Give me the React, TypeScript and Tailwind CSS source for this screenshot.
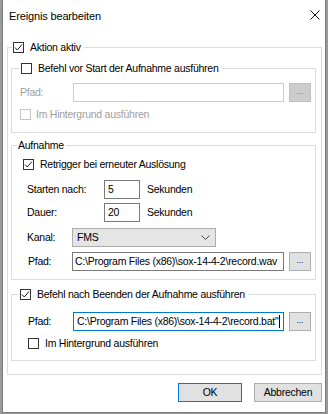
import React from "react";

const Check = ({ checked, disabled }: { checked?: boolean; disabled?: boolean }) => (
  <span
    className={`inline-flex w-[11px] h-[11px] shrink-0 items-center justify-center bg-white border ${
      disabled ? "border-[#c4c4c4]" : "border-[#333333]"
    }`}
  >
    {checked && (
      <svg width="9" height="9" viewBox="0 0 9 9" className="block">
        <polyline points="1,4.5 3.3,7 8,1.5" fill="none" stroke="#222" strokeWidth="1" />
      </svg>
    )}
  </span>
);

const Dots = ({ disabled }: { disabled?: boolean }) => (
  <div
    className={`w-[22px] h-[19px] ml-[5px] flex items-center justify-center border text-[9px] leading-none pb-[2px] ${
      disabled ? "bg-[#cccccc] border-[#bfbfbf] text-[#8a8a8a]" : "bg-[#e1e1e1] border-[#adadad] text-[#333]"
    }`}
  >
    ...
  </div>
);

export default function App() {
  return (
    <div className="w-[328px] h-[414px] bg-[#9a9a9a] pl-[2px] font-['Liberation_Sans',Arial,sans-serif] text-[10.5px] leading-[11px] tracking-[-0.25px] text-black overflow-hidden">
      <div className="w-[324px] h-[413px] bg-white border border-t-0 border-[#7a7a7a] flex flex-col">
        {/* Title bar */}
        <div className="h-[30px] flex items-center pl-[6px] pr-[3px] shrink-0">
          <span className="text-[11px] tracking-[-0.15px] pt-[2px]">Ereignis bearbeiten</span>
          <div className="flex-1" />
          <svg width="10" height="10" viewBox="0 0 10 10" className="mr-[2px]">
            <line x1="0.5" y1="0.5" x2="9.5" y2="9.5" stroke="#111" strokeWidth="1" />
            <line x1="9.5" y1="0.5" x2="0.5" y2="9.5" stroke="#111" strokeWidth="1" />
          </svg>
        </div>

        {/* Outer group */}
        <fieldset className="ml-[4px] mt-[10px] w-[315px] border border-[#dcdcdc]">
          <legend className="ml-[4px] pl-[1px] pr-[3px] h-[14px] flex items-center gap-[6px]">
            <Check checked />
            <span>Aktion aktiv</span>
          </legend>
          <div className="pt-[7px] pl-[3px] pb-[13px] flex flex-col">
            {/* Befehl vor Start */}
            <fieldset className="w-[305px] border border-[#dcdcdc]">
              <legend className="ml-[8px] pl-[1px] pr-[3px] h-[14px] flex items-center gap-[6px]">
                <Check />
                <span>Befehl vor Start der Aufnahme ausführen</span>
              </legend>
              <div className="flex flex-col pl-[8px] pt-[8px] pb-[12px]">
                <div className="flex items-center">
                  <span className="w-[53px] text-[#a0a0a0]">Pfad:</span>
                  <div className="w-[211px] h-[19px] border border-[#cccccc] bg-white" />
                  <Dots disabled />
                </div>
                <div className="flex items-center gap-[5px] mt-[7px]">
                  <Check disabled />
                  <span className="text-[#a0a0a0]">Im Hintergrund ausführen</span>
                </div>
              </div>
            </fieldset>

            {/* Aufnahme */}
            <fieldset className="w-[305px] mt-[5px] border border-[#dcdcdc]">
              <legend className="ml-[5px] pl-[1px] pr-[2px] h-[14px] flex items-center">
                <span>Aufnahme</span>
              </legend>
              <div className="flex flex-col pt-[7px] pb-[8px]">
                <div className="flex items-center gap-[6px] pl-[11px]">
                  <Check checked />
                  <span>Retrigger bei erneuter Auslösung</span>
                </div>
                <div className="flex items-center pl-[15px] mt-[10px]">
                  <span className="w-[77px]">Starten nach:</span>
                  <div className="w-[36px] h-[19px] border border-[#7a7a7a] flex items-center pl-[3px]">5</div>
                  <span className="ml-[7px]">Sekunden</span>
                </div>
                <div className="flex items-center pl-[15px] mt-[4px]">
                  <span className="w-[77px]">Dauer:</span>
                  <div className="w-[36px] h-[19px] border border-[#7a7a7a] flex items-center pl-[3px]">20</div>
                  <span className="ml-[7px]">Sekunden</span>
                </div>
                <div className="flex items-center pl-[15px] mt-[6px]">
                  <span className="w-[45px]">Kanal:</span>
                  <div className="w-[144px] h-[19px] border border-[#adadad] bg-[#e5e5e5] flex items-center pl-[4px] pr-[5px]">
                    <span className="flex-1">FMS</span>
                    <svg width="9" height="5" viewBox="0 0 9 5">
                      <polyline points="0.5,0.5 4.5,4.5 8.5,0.5" fill="none" stroke="#444" strokeWidth="1" />
                    </svg>
                  </div>
                </div>
                <div className="flex items-center pl-[16px] mt-[5px]">
                  <span className="w-[44px]">Pfad:</span>
                  <div className="w-[212px] h-[19px] border border-[#7a7a7a] flex items-center pl-[2px] whitespace-nowrap overflow-hidden">
                    C:\Program Files (x86)\sox-14-4-2\record.wav
                  </div>
                  <Dots />
                </div>
              </div>
            </fieldset>

            {/* Befehl nach Beenden */}
            <fieldset className="w-[305px] mt-[7px] border border-[#dcdcdc]">
              <legend className="ml-[7px] pl-[1px] pr-[3px] h-[14px] flex items-center gap-[6px]">
                <Check checked />
                <span>Befehl nach Beenden der Aufnahme ausführen</span>
              </legend>
              <div className="flex flex-col pt-[11px] pb-[11px]">
                <div className="flex items-center pl-[16px]">
                  <span className="w-[45px]">Pfad:</span>
                  <div className="w-[211px] h-[19px] border border-[#0078d7] flex items-center pl-[3px] whitespace-nowrap overflow-hidden">
                    <span>C:\Program Files (x86)\sox-14-4-2\record.bat"</span>
                    <span className="w-px h-[13px] bg-black ml-[1px]" />
                  </div>
                  <Dots />
                </div>
                <div className="flex items-center gap-[6px] pl-[16px] mt-[7px]">
                  <Check />
                  <span>Im Hintergrund ausführen</span>
                </div>
              </div>
            </fieldset>
          </div>
        </fieldset>

        {/* Buttons */}
        <div className="flex justify-end gap-[12px] pr-[3px] mt-[8px]">
          <div className="w-[64px] h-[19px] border border-[#0078d7] bg-[#e1e1e1] flex items-center justify-center">
            OK
          </div>
          <div className="w-[68px] h-[19px] border border-[#adadad] bg-[#e1e1e1] flex items-center justify-center">
            Abbrechen
          </div>
        </div>
      </div>
    </div>
  );
}
